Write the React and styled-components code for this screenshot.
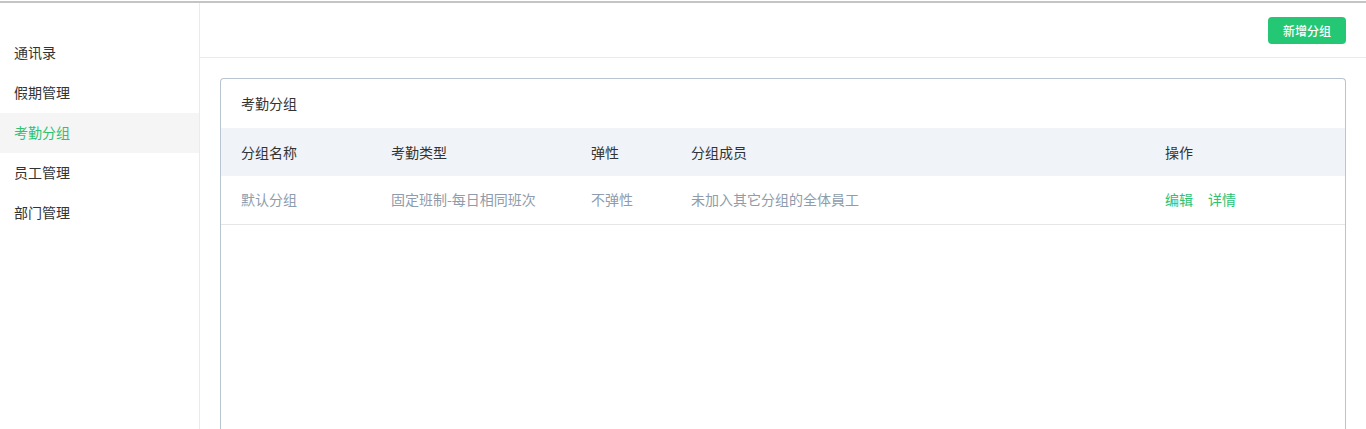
import React from "react";
import styled, { createGlobalStyle } from "styled-components";

const Global = createGlobalStyle`
  html, body { margin: 0; padding: 0; background: #fff; }
  body {
    font-family: "Noto Sans CJK SC", "Noto Sans", "Liberation Sans", sans-serif;
    font-size: 14px;
    color: #333;
  }
  * { box-sizing: border-box; }
`;

const Page = styled.div`
  height: 429px;
  border-top: 1px solid #fff;
  display: flex;
  flex-direction: column;
  overflow: hidden;
`;

const TopRule = styled.div`
  height: 2px;
  background: #c4c4c4;
  flex: none;
`;

const Body = styled.div`
  flex: 1;
  display: flex;
  min-height: 0;
`;

const Sidebar = styled.nav`
  width: 200px;
  flex: none;
  border-right: 1px solid #ebebeb;
  padding-top: 30px;
  display: flex;
  flex-direction: column;
`;

const MenuItem = styled.div`
  height: 40px;
  line-height: 38px;
  padding-left: 14px;
  font-size: 14px;
  color: ${(p) => (p.$active ? "#2cc273" : "#333")};
  background: ${(p) => (p.$active ? "#f5f5f5" : "transparent")};
`;

const Main = styled.main`
  flex: 1;
  display: flex;
  flex-direction: column;
  min-width: 0;
`;

const Header = styled.header`
  height: 55px;
  border-bottom: 1px solid #ebebeb;
  display: flex;
  align-items: center;
  justify-content: flex-end;
  padding-right: 20px;
  flex: none;
`;

const PrimaryButton = styled.button`
  width: 78px;
  height: 27px;
  border: none;
  border-radius: 4px;
  background: #24c774;
  color: #fff;
  font-family: inherit;
  font-size: 12px;
  font-weight: 500;
  padding: 0;
  margin-top: 1px;
`;

const Content = styled.div`
  flex: 1;
  padding: 20px 20px 0 20px;
  display: flex;
  min-height: 0;
`;

const Card = styled.section`
  flex: 1;
  border: 1px solid #b8c5d0;
  border-bottom: none;
  border-radius: 4px 4px 0 0;
  display: flex;
  flex-direction: column;
`;

const CardTitle = styled.div`
  height: 49px;
  line-height: 49px;
  padding-left: 20px;
  font-size: 14px;
  color: #333;
`;

const Table = styled.div`
  display: flex;
  flex-direction: column;
`;

const Row = styled.div`
  display: grid;
  grid-template-columns: 150px 200px 100px 474px 1fr;
  align-items: center;
  background: ${(p) => (p.$head ? "#f0f3f8" : "#fff")};
  border-bottom: ${(p) => (p.$head ? "none" : "1px solid #e6e6e6")};
  height: ${(p) => (p.$head ? "48px" : "49px")};
  padding-bottom: ${(p) => (p.$head ? "0" : "2px")};
`;

const Cell = styled.div`
  padding-left: 20px;
  font-size: 14px;
  color: ${(p) => (p.$head ? "#333" : "#8f9cab")};
  white-space: nowrap;
  display: flex;
  gap: 15px;
`;

const Link = styled.a`
  color: #2cc273;
  text-decoration: none;
  cursor: pointer;
`;

const menu = ["通讯录", "假期管理", "考勤分组", "员工管理", "部门管理"];

export default function App() {
  return (
    <>
      <Global />
      <Page>
        <TopRule />
        <Body>
          <Sidebar>
            {menu.map((m) => (
              <MenuItem key={m} $active={m === "考勤分组"}>
                {m}
              </MenuItem>
            ))}
          </Sidebar>
          <Main>
            <Header>
              <PrimaryButton>新增分组</PrimaryButton>
            </Header>
            <Content>
              <Card>
                <CardTitle>考勤分组</CardTitle>
                <Table>
                  <Row $head>
                    <Cell $head>分组名称</Cell>
                    <Cell $head>考勤类型</Cell>
                    <Cell $head>弹性</Cell>
                    <Cell $head>分组成员</Cell>
                    <Cell $head>操作</Cell>
                  </Row>
                  <Row>
                    <Cell>默认分组</Cell>
                    <Cell>固定班制-每日相同班次</Cell>
                    <Cell>不弹性</Cell>
                    <Cell>未加入其它分组的全体員工</Cell>
                    <Cell>
                      <Link>编辑</Link>
                      <Link>详情</Link>
                    </Cell>
                  </Row>
                </Table>
              </Card>
            </Content>
          </Main>
        </Body>
      </Page>
    </>
  );
}
